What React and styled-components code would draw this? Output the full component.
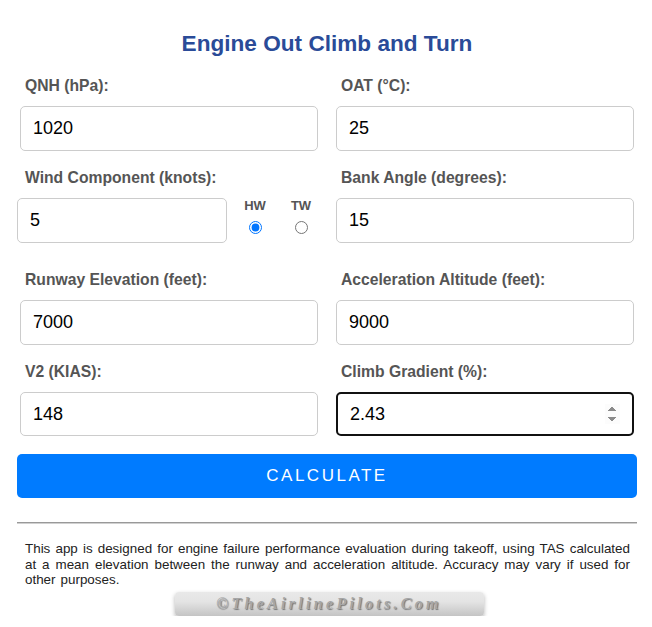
import React from "react";
import styled, { createGlobalStyle } from "styled-components";

const Global = createGlobalStyle`
  html, body { margin: 0; padding: 0; background: #fff; }
  body { font-family: "Liberation Sans", Arial, sans-serif; }
  * { box-sizing: border-box; }
`;

const Page = styled.div`
  width: 620px;
  margin: 0 15px 0 17px;
  padding-top: 31px;
`;

const Title = styled.h1`
  margin: 0 0 20px;
  font-size: 22.6px;
  line-height: 26px;
  font-weight: bold;
  text-align: center;
  color: #2a4b98;
`;

const Form = styled.div`
  display: grid;
  grid-template-columns: 298px 298px;
  column-gap: 18px;
  row-gap: 18px;
  padding: 0 3px;
`;

const Field = styled.div`
  display: flex;
  flex-direction: column;
  padding-bottom: ${(p) => (p.$extra ? "10px" : "0")};
`;

const Label = styled.label`
  display: block;
  padding-left: 5px;
  margin-bottom: 11px;
  font-size: 15.7px;
  line-height: 18px;
  font-weight: bold;
  color: #555;
`;

const Input = styled.input`
  display: block;
  width: ${(p) => p.$width || "100%"};
  height: ${(p) => p.$height || "44px"};
  margin-left: ${(p) => p.$shift || "0"};
  padding: 0 12px;
  font-family: "Liberation Sans", Arial, sans-serif;
  font-size: 18px;
  color: #000;
  background: #fff;
  border: ${(p) => (p.$focused ? "2px solid #111" : "1px solid #ccc")};
  border-radius: 5px;
  outline: none;
  &::-webkit-inner-spin-button {
    opacity: ${(p) => (p.$focused ? 1 : 0)};
  }
`;

const WindRow = styled.div`
  display: flex;
  align-items: flex-start;
`;

const RadioGroup = styled.div`
  display: flex;
  gap: 20px;
  margin-left: 15px;
  padding-top: 1px;
`;

const RadioOption = styled.label`
  display: flex;
  flex-direction: column;
  align-items: center;
  width: 26px;
  font-size: 13px;
  line-height: 14px;
  font-weight: bold;
  color: #555;
`;

const Radio = styled.input`
  margin: 8px 0 0;
  width: 13px;
  height: 13px;
`;

const Button = styled.button`
  display: block;
  width: 620px;
  height: 44px;
  margin-top: 18px;
  border: none;
  border-radius: 5px;
  background: #007bff;
  color: #fff;
  font-family: "Liberation Sans", Arial, sans-serif;
  font-size: 17px;
  letter-spacing: 2.5px;
  cursor: pointer;
`;

const Rule = styled.hr`
  margin: 24px 0 0;
  border: none;
  border-top: 1px solid #999;
  border-bottom: 1px solid #d0d0d0;
  height: 0;
`;

const Note = styled.p`
  margin: 17px 7px 0 8px;
  font-size: 13.4px;
  line-height: 15.5px;
  word-spacing: 1.3px;
  text-align: justify;
  color: #222;
`;

const LogoWrap = styled.div`
  display: flex;
  justify-content: center;
  margin-top: 4px;
  padding-left: 4px;
`;

const Logo = styled.div`
  width: 309px;
  height: 24px;
  border-radius: 4px;
  background: linear-gradient(to bottom, #e9e9e9 0%, #e4e4e4 40%, #c4c4c4 100%);
  box-shadow: 0 2px 4px rgba(0, 0, 0, 0.3);
  text-align: center;
  font-family: "Liberation Serif", "Times New Roman", serif;
  font-style: italic;
  font-weight: bold;
  font-size: 16px;
  line-height: 24px;
  letter-spacing: 3.3px;
  color: #a6a6a6;
  text-shadow: 1px 1px 1px #777;
`;

export default function App() {
  return (
    <>
      <Global />
      <Page>
        <Title>Engine Out Climb and Turn</Title>
        <Form>
          <Field>
            <Label>QNH (hPa):</Label>
            <Input type="text" defaultValue="1020" $height="45px" />
          </Field>
          <Field>
            <Label>OAT (°C):</Label>
            <Input type="text" defaultValue="25" $height="45px" />
          </Field>
          <Field $extra>
            <Label>Wind Component (knots):</Label>
            <WindRow>
              <Input type="text" defaultValue="5" $width="210px" $height="45px" $shift="-3px" />
              <RadioGroup>
                <RadioOption>
                  HW
                  <Radio type="radio" name="wind" defaultChecked />
                </RadioOption>
                <RadioOption>
                  TW
                  <Radio type="radio" name="wind" />
                </RadioOption>
              </RadioGroup>
            </WindRow>
          </Field>
          <Field $extra>
            <Label>Bank Angle (degrees):</Label>
            <Input type="text" defaultValue="15" $height="45px" />
          </Field>
          <Field>
            <Label>Runway Elevation (feet):</Label>
            <Input type="text" defaultValue="7000" $height="45px" />
          </Field>
          <Field>
            <Label>Acceleration Altitude (feet):</Label>
            <Input type="text" defaultValue="9000" $height="45px" />
          </Field>
          <Field>
            <Label>V2 (KIAS):</Label>
            <Input type="text" defaultValue="148" />
          </Field>
          <Field>
            <Label>Climb Gradient (%):</Label>
            <Input type="number" step="0.01" defaultValue="2.43" $focused />
          </Field>
        </Form>
        <Button>CALCULATE</Button>
        <Rule />
        <Note>
          This app is designed for engine failure performance evaluation during takeoff, using TAS
          calculated at a mean elevation between the runway and acceleration altitude. Accuracy may
          vary if used for other purposes.
        </Note>
        <LogoWrap>
          <Logo>©TheAirlinePilots.Com</Logo>
        </LogoWrap>
      </Page>
    </>
  );
}
